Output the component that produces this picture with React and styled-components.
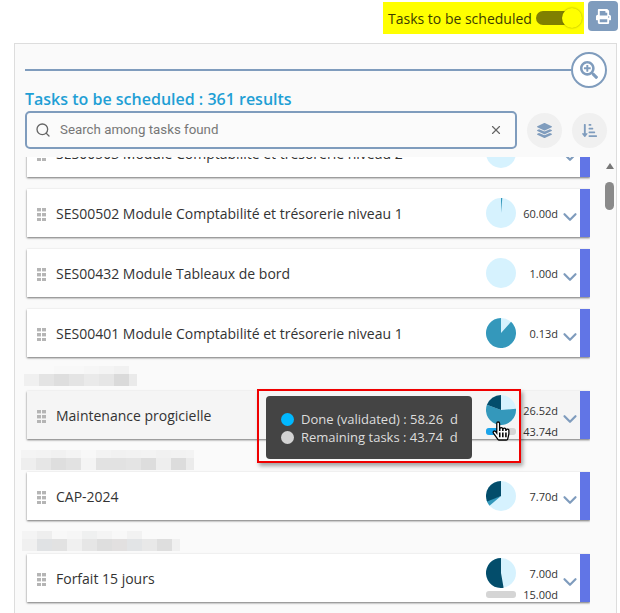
import React from "react"
import styled, { createGlobalStyle } from "styled-components"
import { ChevronDown, Search, X } from "lucide-react"
import {
  FaPrint,
  FaLayerGroup,
  FaSearchPlus,
  FaSortAmountDownAlt,
  FaHandPointer,
} from "react-icons/fa"

const LIGHT = "#d6f2fe"
const MID = "#3498bb"
const DARK = "#034d6b"
const STEEL = "#7f9cbd"

const GlobalStyle = createGlobalStyle`
  html, body {
    margin: 0;
    height: 100%;
    overflow: hidden;
    background: #fff;
    font-family: "Open Sans", sans-serif;
  }
`
const Page = styled.div`
  width: 620px;
  height: 613px;
  display: flex;
  flex-direction: column;
  overflow: hidden;
`
const TopBar = styled.div`
  height: 43px;
  flex: none;
  display: flex;
  justify-content: flex-end;
  align-items: flex-start;
  gap: 4px;
  padding: 1px 2px 0 0;
  box-sizing: border-box;
`
const Highlight = styled.div`
  width: 201px;
  height: 32px;
  margin-top: 1px;
  padding-left: 5px;
  box-sizing: border-box;
  background: #ffff00;
  display: flex;
  align-items: center;
  gap: 4px;
  font-size: 14px;
  color: #3c3c00;
  white-space: nowrap;
`
const Toggle = styled.div`
  position: relative;
  width: 42px;
  height: 14px;
  border-radius: 7px;
  background: #808000;
`
const ToggleKnob = styled.div`
  position: absolute;
  right: -4px;
  top: -3px;
  width: 20px;
  height: 20px;
  border-radius: 50%;
  background: #ffff00;
  box-shadow: 0 0 2px rgba(90, 90, 0, 0.6);
`
const PrintButton = styled.div`
  width: 30px;
  height: 30px;
  border-radius: 4px;
  background: ${STEEL};
  color: #fff;
  display: flex;
  align-items: center;
  justify-content: center;
  font-size: 15px;
`
const Panel = styled.div`
  flex: 1;
  margin: 0 3px 0 14px;
  border: 1px solid #ddd;
  border-bottom: 0;
  background: #fafafa;
  display: flex;
  flex-direction: column;
  min-height: 0;
`
const ZoomRow = styled.div`
  height: 35px;
  margin: 8px 9px 0 10px;
  display: flex;
  align-items: center;
  flex: none;
`
const ZoomLine = styled.div`
  flex: 1;
  height: 2px;
  background: ${STEEL};
`
const ZoomCircle = styled.div`
  width: 36px;
  height: 36px;
  box-sizing: border-box;
  border: 2px solid ${STEEL};
  border-radius: 50%;
  background: #fff;
  color: ${STEEL};
  display: flex;
  align-items: center;
  justify-content: center;
  font-size: 18px;
`
const Title = styled.div`
  height: 23px;
  line-height: 25px;
  margin-left: 10px;
  font-size: 16px;
  font-weight: 600;
  color: #1f9fd5;
  flex: none;
`
const SearchRow = styled.div`
  display: flex;
  align-items: center;
  margin: 1px 9px 0 10px;
  flex: none;
`
const SearchBox = styled.div`
  flex: 1;
  height: 38px;
  box-sizing: border-box;
  border: 2px solid ${STEEL};
  border-radius: 5px;
  display: flex;
  align-items: center;
  padding: 0 12px 0 8px;
  gap: 9px;
  color: #666;
  background: #fbfbfb;
`
const SearchText = styled.span`
  flex: 1;
  margin-top: -2px;
  font-family: Roboto, sans-serif;
  font-size: 13.3px;
  color: #777;
`
const RoundButton = styled.div`
  width: 35px;
  height: 35px;
  margin-left: 10px;
  border-radius: 50%;
  background: #f0f0f0;
  color: ${STEEL};
  display: flex;
  align-items: center;
  justify-content: center;
  font-size: 15px;
`
const ListArea = styled.div`
  flex: 1;
  min-height: 0;
  margin-top: 8px;
  display: flex;
`
const List = styled.div`
  width: 575px;
  margin-right: 15px;
  padding-left: 12px;
  box-sizing: border-box;
  flex: none;
  height: 100%;
  overflow: hidden;
`
const Inner = styled.div`
  margin-top: -28px;
  display: flex;
  flex-direction: column;
`
const Card = styled.div`
  position: relative;
  width: 563px;
  height: 48px;
  box-sizing: border-box;
  flex: none;
  margin-bottom: ${(p) => (p.$last ? 0 : 12)}px;
  background: ${(p) => (p.$hover ? "#f5f5f5" : "#fff")};
  box-shadow: 0 1px 2px rgba(0, 0, 0, 0.55);
  border-right: 10px solid #6175e6;
  display: flex;
  align-items: center;
  padding-left: 10px;
`
const Grip = styled.svg`
  width: 9px;
  height: 13px;
  flex: none;
  margin-right: 10px;
  margin-top: 2px;
  fill: #b5b5b5;
`
const CardName = styled.div`
  flex: 1;
  font-size: 14px;
  color: #333;
  white-space: nowrap;
`
const Stats = styled.div`
  width: 72px;
  height: 48px;
  flex: none;
  display: grid;
  grid-template-columns: 30px 1fr;
  grid-template-rows: 30px 7px;
  row-gap: 3px;
  padding-top: ${(p) => (p.$double ? 4 : 9)}px;
  box-sizing: border-box;
`
const Value = styled.div`
  align-self: center;
  text-align: right;
  font-size: 11px;
  line-height: 15px;
  color: #333;
`
const Bar = styled.div`
  width: 30px;
  border-radius: 3px;
  background: #d5d5d5;
  overflow: hidden;
`
const BarFill = styled.div`
  height: 100%;
  background: #1aa5ec;
`
const Chevron = styled(ChevronDown)`
  width: 22px;
  height: 22px;
  flex: none;
  margin: 8px -1px 0 1px;
  color: ${STEEL};
`
const Pixelated = styled.div`
  height: ${(p) => p.$height}px;
  width: ${(p) => p.$width}px;
  overflow: hidden;
  box-sizing: border-box;
  padding-top: ${(p) => p.$top}px;
  margin-left: ${(p) => p.$left}px;
  display: flex;
  flex-direction: column;
  flex: none;
`
const PixelRow = styled.div`
  display: flex;
  flex: none;
  height: ${(p) => p.$h}px;
`
const PixelCell = styled.div`
  width: 15px;
  flex: none;
  background: ${(p) => p.$c};
`
const CalloutFrame = styled.div`
  position: absolute;
  left: 230px;
  top: -2px;
  width: 264px;
  height: 74px;
  box-sizing: border-box;
  border: 2px solid #f00000;
  padding: 5px 0 0 7px;
  box-shadow: 2px 3px 4px rgba(0, 0, 0, 0.35);
  z-index: 2;
`
const Tooltip = styled.div`
  width: 206px;
  height: 63px;
  box-sizing: border-box;
  background: #444;
  border-radius: 4px;
  padding: 14px 0 0 15px;
  color: #ddd;
  font-size: 13px;
  line-height: 18px;
`
const TipLine = styled.div`
  display: flex;
  align-items: center;
  gap: 7px;
  white-space: nowrap;
`
const Dot = styled.span`
  width: 13px;
  height: 13px;
  border-radius: 50%;
  background: ${(p) => p.$c};
`
const Hand = styled(FaHandPointer)`
  position: absolute;
  left: 466px;
  top: 31px;
  width: 16px;
  height: 18px;
  color: #fff;
  z-index: 3;
  stroke: #000;
  stroke-width: 36;
  overflow: visible;
`
const ScrollTrack = styled.div`
  width: 9px;
  flex: none;
  display: flex;
  flex-direction: column;
  align-items: center;
`
const ScrollArrow = styled.div`
  margin-top: 6px;
  width: 0;
  height: 0;
  border-left: 4px solid transparent;
  border-right: 4px solid transparent;
  border-bottom: 6px solid #777;
`
const ScrollThumb = styled.div`
  margin-top: 13px;
  width: 9px;
  height: 28px;
  border-radius: 5px;
  background: #8a8a8a;
`

// slices: [colour, start degree, end degree]
const slicePath = (start, end) => {
  const pt = (d) => {
    const r = ((d - 90) * Math.PI) / 180
    return `${15 + 15 * Math.cos(r)} ${15 + 15 * Math.sin(r)}`
  }
  return `M15 15L${pt(start)}A15 15 0 ${end - start > 180 ? 1 : 0} 1 ${pt(end)}Z`
}

const Pie = ({ slices = [] }) => (
  <svg width="30" height="30" viewBox="0 0 30 30">
    <circle cx="15" cy="15" r="15" fill={LIGHT} />
    {slices.map(([c, s, e]) => (
      <path key={s} d={slicePath(s, e)} fill={c} />
    ))}
  </svg>
)

const GripIcon = () => (
  <Grip viewBox="0 0 9 13">
    {[0, 5].map((x) =>
      [0, 5, 10].map((y) => <rect key={x + "-" + y} x={x} y={y} width="4" height="3.4" />)
    )}
  </Grip>
)

const TaskCard = ({ name, slices, value, second, fill, hover, last, children }) => (
  <Card $hover={hover} $last={last}>
    <GripIcon />
    <CardName>{name}</CardName>
    <Stats $double={!!second}>
      <Pie slices={slices} />
      <Value>{value}</Value>
      {second && (
        <>
          <Bar>
            <BarFill style={{ width: fill + "%" }} />
          </Bar>
          <Value>{second}</Value>
        </>
      )}
    </Stats>
    <Chevron strokeWidth={2.4} />
    {children}
  </Card>
)

const BlurLabel = ({ top, left, width, height, rows }) => (
  <Pixelated $top={top} $left={left} $width={width} $height={height}>
    {rows.map((row, i) => (
      <PixelRow key={i} $h={i === 0 ? 8 : 12}>
        {row.map((c, j) => (
          <PixelCell key={j} $c={c} />
        ))}
      </PixelRow>
    ))}
  </Pixelated>
)

const App = () => {
  return (
    <Page>
      <GlobalStyle />
      <TopBar>
        <Highlight>
          Tasks to be scheduled
          <Toggle>
            <ToggleKnob />
          </Toggle>
        </Highlight>
        <PrintButton>
          <FaPrint />
        </PrintButton>
      </TopBar>
      <Panel>
        <ZoomRow>
          <ZoomLine />
          <ZoomCircle>
            <FaSearchPlus />
          </ZoomCircle>
        </ZoomRow>
        <Title>Tasks to be scheduled : 361 results</Title>
        <SearchRow>
          <SearchBox>
            <Search size={16} />
            <SearchText>Search among tasks found</SearchText>
            <X size={14} />
          </SearchBox>
          <RoundButton>
            <FaLayerGroup />
          </RoundButton>
          <RoundButton>
            <FaSortAmountDownAlt />
          </RoundButton>
        </SearchRow>
        <ListArea>
          <List>
            <Inner>
              <TaskCard name="SES00503 Module Comptabilité et trésorerie niveau 2" />
              <TaskCard
                name="SES00502 Module Comptabilité et trésorerie niveau 1"
                value="60.00d"
                slices={[[MID, 0, 5]]}
              />
              <TaskCard name="SES00432 Module Tableaux de bord" value="1.00d" />
              <TaskCard
                name="SES00401 Module Comptabilité et trésorerie niveau 1"
                value="0.13d"
                slices={[[MID, 42, 360]]}
                last
              />
              <BlurLabel
                top={9}
                left={-3}
                width={113}
                height={34}
                rows={[
                  ["#fafafa", "#fafafa", "#f8f8f8", "#f8f8f8", "#f6f6f6", "#f4f4f4", "#f1f1f1"],
                  ["#f0f0f0", "#e4e4e4", "#dedede", "#e4e4e4", "#eaeaea", "#e6e6e6", "#dadada", "#eaeaea"],
                ]}
              />
              <TaskCard
                name="Maintenance progicielle"
                value="26.52d"
                second="43.74d"
                fill={58}
                slices={[
                  [MID, 85, 290],
                  [DARK, 290, 360],
                ]}
                hover
                last
              >
                <CalloutFrame>
                  <Tooltip>
                    <TipLine>
                      <Dot $c="#00b8ff" />
                      Done (validated) : 58.26&nbsp; d
                    </TipLine>
                    <TipLine>
                      <Dot $c="#d3d3d3" />
                      Remaining tasks : 43.74&nbsp; d
                    </TipLine>
                  </Tooltip>
                </CalloutFrame>
                <Hand />
              </TaskCard>
              <BlurLabel
                top={11}
                left={-6}
                width={173}
                height={33}
                rows={[
                  ["#f4f4f4", "#f3f3f3", "#f1f1f1", "#f4f4f4", "#f8f8f8", "#f3f3f3", "#f1f1f1", "#f2f2f2", "#f3f3f3", "#f1f1f1", "#f2f2f2", "#f3f3f3"],
                  ["#eeeeee", "#e6e6e6", "#dedede", "#e2e2e2", "#f4f4f4", "#e2e2e2", "#e2e2e2", "#e4e4e4", "#dddddd", "#eeeeee", "#dcdcdc", "#ebebeb"],
                ]}
              />
              <TaskCard
                name="CAP-2024"
                value="7.70d"
                slices={[
                  [MID, 230, 255],
                  [DARK, 248, 360],
                ]}
                last
              />
              <BlurLabel
                top={11}
                left={-5}
                width={158}
                height={34}
                rows={[
                  ["#f4f4f4", "#eeeeee", "#f8f8f8", "#f6f6f6", "#eff0f0", "#f4f4f4", "#f8f8f8", "#f2f2f2", "#fafafa", "#fafafa"],
                  ["#f0f0f0", "#e0e2e4", "#e2e2e2", "#f0f0f0", "#e6e6e6", "#dedede", "#e2e0e0", "#e2e4e6", "#e8e8e8", "#dedede", "#f0f0f0"],
                ]}
              />
              <TaskCard
                name="Forfait 15 jours"
                value="7.00d"
                second="15.00d"
                fill={0}
                slices={[[DARK, 170, 360]]}
                last
              />
            </Inner>
          </List>
          <ScrollTrack>
            <ScrollArrow />
            <ScrollThumb />
          </ScrollTrack>
        </ListArea>
      </Panel>
    </Page>
  )
}

export default App
